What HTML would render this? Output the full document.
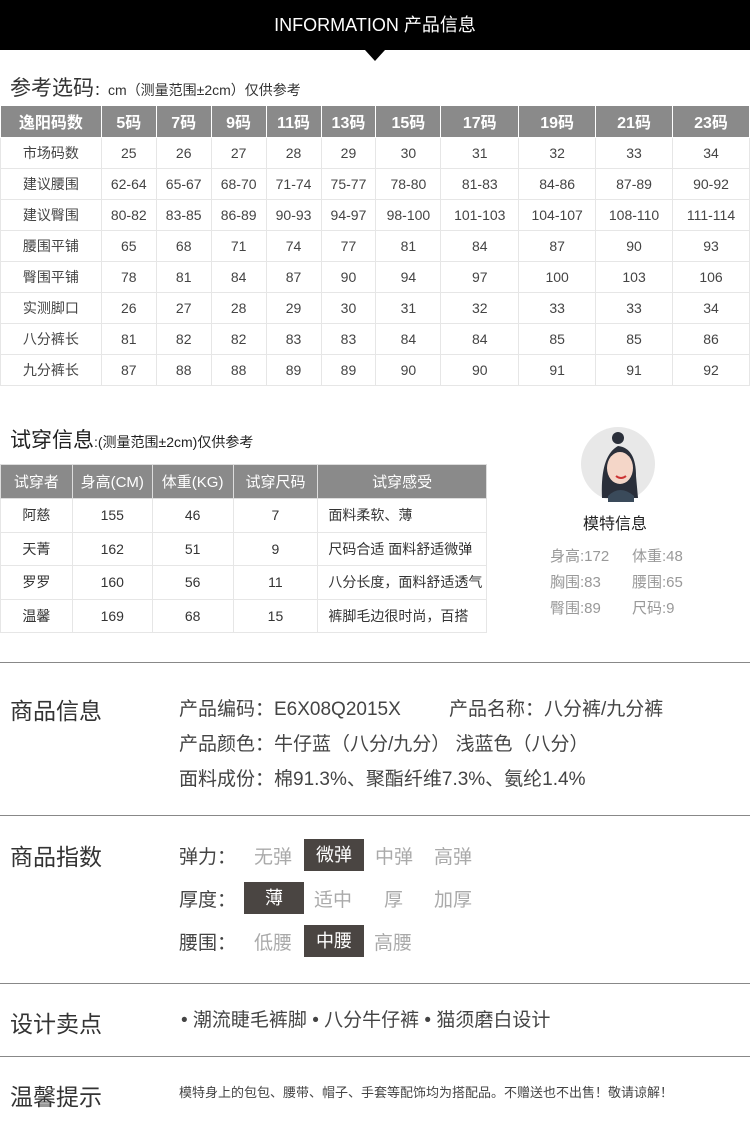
<!DOCTYPE html>
<html><head><meta charset="utf-8"><style>
*{margin:0;padding:0;box-sizing:border-box}
body{width:750px;height:1135px;background:#fff;font-family:"Liberation Sans","Noto Sans CJK SC",sans-serif;color:#333;position:relative;overflow:hidden}
.a{position:absolute;white-space:nowrap}
.hdr{left:0;top:0;width:750px;height:50px;background:#000;color:#fff;font-size:18px;line-height:50px;text-align:center}
.tri{left:365px;top:50px;width:0;height:0;border-left:10px solid transparent;border-right:10px solid transparent;border-top:11px solid #000}
table{border-collapse:collapse;position:absolute}
#t1{left:0;top:106px;width:750px}
#t1 td{height:31px;text-align:center;font-size:14px;color:#444;border:1px solid #e6e6e6;padding:0}
#t1 tr:first-child td{background:#8a8a8a;color:#fff;font-weight:bold;font-size:16px;border:1px solid #fff;border-top:none}
#t2{left:0;top:464px;width:487px}
#t2 td{height:33.5px;text-align:center;font-size:14px;color:#333;border:1px solid #e6e6e6;padding:0}
#t2 tr:first-child td{background:#8a8a8a;color:#fff;font-size:15px;border:1px solid #ddd;height:34px}
#t2 td.l{text-align:left;padding-left:10px}
.line{left:0;width:750px;height:1px;background:#888}
.st{left:10px;font-size:23px;color:#333}
.tx{font-size:19px;color:#444}
.g{color:#aaa}
.box{background:#4a4542;color:#fff;text-align:center;width:60px;height:32px;line-height:32px;font-size:18px}
</style></head><body>
<div class="a hdr">INFORMATION 产品信息</div>
<div class="a tri"></div>
<div class="a" style="left:10px;top:72px;font-size:21px;color:#333">参考选码<span style="font-size:14px">：cm（测量范围±2cm）仅供参考</span></div>
<table id="t1">
<colgroup><col style="width:101px"><col style="width:55px"><col style="width:55px"><col style="width:55px"><col style="width:55px"><col style="width:55px"><col style="width:65px"><col style="width:78px"><col style="width:77px"><col style="width:77px"><col style="width:77px"></colgroup>
<tr><td>逸阳码数</td><td>5码</td><td>7码</td><td>9码</td><td>11码</td><td>13码</td><td>15码</td><td>17码</td><td>19码</td><td>21码</td><td>23码</td></tr>
<tr><td>市场码数</td><td>25</td><td>26</td><td>27</td><td>28</td><td>29</td><td>30</td><td>31</td><td>32</td><td>33</td><td>34</td></tr>
<tr><td>建议腰围</td><td>62-64</td><td>65-67</td><td>68-70</td><td>71-74</td><td>75-77</td><td>78-80</td><td>81-83</td><td>84-86</td><td>87-89</td><td>90-92</td></tr>
<tr><td>建议臀围</td><td>80-82</td><td>83-85</td><td>86-89</td><td>90-93</td><td>94-97</td><td>98-100</td><td>101-103</td><td>104-107</td><td>108-110</td><td>111-114</td></tr>
<tr><td>腰围平铺</td><td>65</td><td>68</td><td>71</td><td>74</td><td>77</td><td>81</td><td>84</td><td>87</td><td>90</td><td>93</td></tr>
<tr><td>臀围平铺</td><td>78</td><td>81</td><td>84</td><td>87</td><td>90</td><td>94</td><td>97</td><td>100</td><td>103</td><td>106</td></tr>
<tr><td>实测脚口</td><td>26</td><td>27</td><td>28</td><td>29</td><td>30</td><td>31</td><td>32</td><td>33</td><td>33</td><td>34</td></tr>
<tr><td>八分裤长</td><td>81</td><td>82</td><td>82</td><td>83</td><td>83</td><td>84</td><td>84</td><td>85</td><td>85</td><td>86</td></tr>
<tr><td>九分裤长</td><td>87</td><td>88</td><td>88</td><td>89</td><td>89</td><td>90</td><td>90</td><td>91</td><td>91</td><td>92</td></tr>
</table>
<div class="a" style="left:10px;top:424px;font-size:21px;color:#222">试穿信息<span style="font-size:14px">:(测量范围±2cm)仅供参考</span></div>
<table id="t2">
<colgroup><col style="width:72px"><col style="width:80px"><col style="width:81px"><col style="width:85px"><col style="width:169px"></colgroup>
<tr><td>试穿者</td><td>身高(CM)</td><td>体重(KG)</td><td>试穿尺码</td><td>试穿感受</td></tr>
<tr><td>阿慈</td><td>155</td><td>46</td><td>7</td><td class="l">面料柔软、薄</td></tr>
<tr><td>天菁</td><td>162</td><td>51</td><td>9</td><td class="l">尺码合适 面料舒适微弹</td></tr>
<tr><td>罗罗</td><td>160</td><td>56</td><td>11</td><td class="l">八分长度，面料舒适透气</td></tr>
<tr><td>温馨</td><td>169</td><td>68</td><td>15</td><td class="l">裤脚毛边很时尚，百搭</td></tr>
</table>
<svg class="a" style="left:580px;top:426px" width="76" height="76" viewBox="0 0 76 76">
<circle cx="38" cy="38" r="37" fill="#e8e8e8"/>
<path d="M22 72 Q20 30 38 20 Q56 22 56 50 L58 72Z" fill="#2a2f3a"/>
<circle cx="38" cy="12" r="6" fill="#2a2f3a"/>
<ellipse cx="40" cy="42" rx="13" ry="16" fill="#f4d6c8"/>
<path d="M28 70 Q40 58 54 70 L54 76 L28 76Z" fill="#3a4a5a"/>
<path d="M36 50 Q41 54 46 50" stroke="#c33" stroke-width="2" fill="none"/>
</svg>
<div class="a" style="left:583px;top:510px;font-size:16px;color:#222">模特信息</div>
<div class="a" style="left:550px;top:545px;font-size:15px;color:#999">身高:172</div>
<div class="a" style="left:632px;top:545px;font-size:15px;color:#999">体重:48</div>
<div class="a" style="left:550px;top:571px;font-size:15px;color:#999">胸围:83</div>
<div class="a" style="left:632px;top:571px;font-size:15px;color:#999">腰围:65</div>
<div class="a" style="left:550px;top:597px;font-size:15px;color:#999">臀围:89</div>
<div class="a" style="left:632px;top:597px;font-size:15px;color:#999">尺码:9</div>
<div class="a line" style="top:662px"></div>
<div class="a st" style="top:692px">商品信息</div>
<div class="a tx" style="left:179px;top:694px">产品编码：E6X08Q2015X</div>
<div class="a tx" style="left:449px;top:694px">产品名称：八分裤/九分裤</div>
<div class="a tx" style="left:179px;top:729px">产品颜色：牛仔蓝（八分/九分） 浅蓝色（八分）</div>
<div class="a tx" style="left:179px;top:764px">面料成份：棉91.3%、聚酯纤维7.3%、氨纶1.4%</div>
<div class="a line" style="top:815px"></div>
<div class="a st" style="top:838px">商品指数</div>
<div class="a tx" style="left:179px;top:842px">弹力：</div>
<div class="a tx g" style="left:254px;top:842px">无弹</div>
<div class="a box" style="left:304px;top:839px">微弹</div>
<div class="a tx g" style="left:375px;top:842px">中弹</div>
<div class="a tx g" style="left:434px;top:842px">高弹</div>
<div class="a tx" style="left:179px;top:885px">厚度：</div>
<div class="a box" style="left:244px;top:882px">薄</div>
<div class="a tx g" style="left:314px;top:885px">适中</div>
<div class="a tx g" style="left:384px;top:885px">厚</div>
<div class="a tx g" style="left:434px;top:885px">加厚</div>
<div class="a tx" style="left:179px;top:928px">腰围：</div>
<div class="a tx g" style="left:254px;top:928px">低腰</div>
<div class="a box" style="left:304px;top:925px">中腰</div>
<div class="a tx g" style="left:374px;top:928px">高腰</div>
<div class="a line" style="top:983px"></div>
<div class="a st" style="top:1005px">设计卖点</div>
<div class="a tx" style="left:181px;top:1005px">• 潮流睫毛裤脚 • 八分牛仔裤 • 猫须磨白设计</div>
<div class="a line" style="top:1056px"></div>
<div class="a st" style="top:1078px">温馨提示</div>
<div class="a" style="left:179px;top:1082px;font-size:13px;color:#444">模特身上的包包、腰带、帽子、手套等配饰均为搭配品。不赠送也不出售！敬请谅解！</div>
</body></html>
